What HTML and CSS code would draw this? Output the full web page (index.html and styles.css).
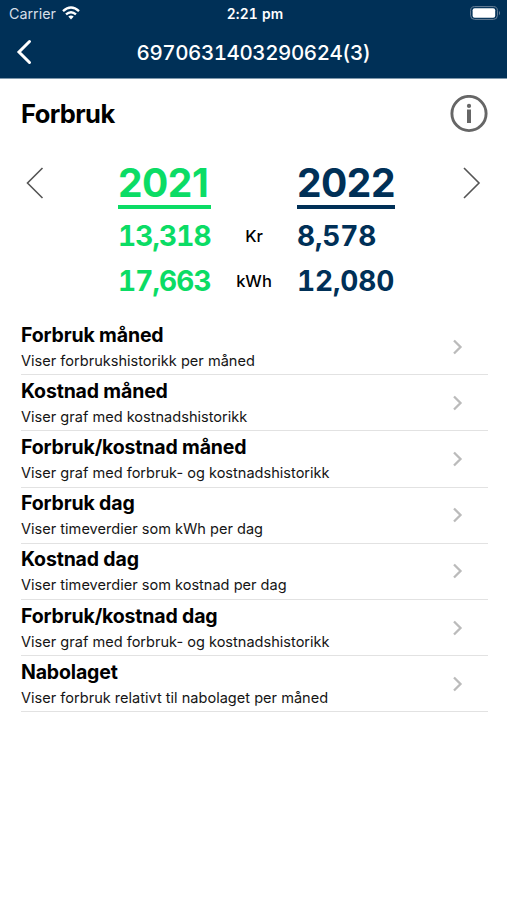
FILE: index.html
```html
<!DOCTYPE html>
<html lang="no">
<head>
<meta charset="utf-8">
<title>Forbruk</title>
<link rel="stylesheet" href="styles.css">
</head>
<body>
<header class="top">
  <div class="status">
    <div class="carrier"><span class="t carrier-name">Carrier</span>
      <svg class="wifi" width="18" height="14" viewBox="0 0 18 14"><g fill="none" stroke="#fff" stroke-width="2.4"><path d="M1 5.2Q9-2 17 5.2"/><path d="M4 8.4q5-4.4 10 0"/></g><path d="M6.3 10.6q2.700-2.200 5.400 0L9 13.500z" fill="#fff"/></svg>
    </div>
    <span class="t clock">2:21 pm</span>
    <svg class="battery" width="31" height="14" viewBox="0 0 31 14"><rect x=".6" y=".6" width="26.800" height="12.800" rx="4" fill="none" stroke="#6b8299"/><rect x="2.600" y="2.200" width="22.600" height="9.600" rx="2" fill="#fff"/><path d="M29 4.700q2 2.300 0 4.600z" fill="#6b8299"/></svg>
  </div>
  <nav class="nav">
    <svg width="16" height="26" viewBox="0 0 16 26"><path d="M13.500 2.500L3 13l10.500 10.500" fill="none" stroke="#fff" stroke-width="3" stroke-linecap="round"/></svg>
    <h1 class="t meter">6970631403290624(3)</h1>
    <span class="spacer"></span>
  </nav>
</header>
<main>
  <section class="heading">
    <h2 class="t title">Forbruk</h2>
    <svg width="38" height="38" viewBox="0 0 38 38"><circle cx="19" cy="18.500" r="17.100" fill="none" stroke="#666" stroke-width="2.900"/><circle cx="19" cy="10.900" r="2.100" fill="#666"/><path d="M17 14.500h4v13.500h-4z" fill="#666"/></svg>
  </section>
  <section class="compare">
    <svg class="prev" width="20" height="32" viewBox="0 0 20 32"><path d="M18.500 1L3.500 16l15 15" fill="none" stroke="#555" stroke-width="1.600"/></svg>
    <div class="figures">
      <div class="year green"><span class="t">2021</span></div><span></span><div class="year navy"><span class="t">2022</span></div>
      <span class="num green"><span class="t">13,318</span></span><span class="unit"><span class="t">Kr</span></span><span class="num navy"><span class="t">8,578</span></span>
      <span class="num green"><span class="t">17,663</span></span><span class="unit"><span class="t">kWh</span></span><span class="num navy"><span class="t">12,080</span></span>
    </div>
    <svg class="next" width="20" height="32" viewBox="0 0 20 32"><path d="M2 1l15 15-15 15" fill="none" stroke="#555" stroke-width="1.600"/></svg>
  </section>
  <ul class="menu">
    <li><div><h3 class="t">Forbruk måned</h3><p class="t">Viser forbrukshistorikk per måned</p></div><svg class="chev" viewBox="0 0 12 16"><path d="M2 1.500L8.500 8 2 14.500"/></svg></li>
    <li><div><h3 class="t">Kostnad måned</h3><p class="t">Viser graf med kostnadshistorikk</p></div><svg class="chev" viewBox="0 0 12 16"><path d="M2 1.500L8.500 8 2 14.500"/></svg></li>
    <li><div><h3 class="t">Forbruk/kostnad måned</h3><p class="t">Viser graf med forbruk- og kostnadshistorikk</p></div><svg class="chev" viewBox="0 0 12 16"><path d="M2 1.500L8.500 8 2 14.500"/></svg></li>
    <li><div><h3 class="t">Forbruk dag</h3><p class="t">Viser timeverdier som kWh per dag</p></div><svg class="chev" viewBox="0 0 12 16"><path d="M2 1.500L8.500 8 2 14.500"/></svg></li>
    <li><div><h3 class="t">Kostnad dag</h3><p class="t">Viser timeverdier som kostnad per dag</p></div><svg class="chev" viewBox="0 0 12 16"><path d="M2 1.500L8.500 8 2 14.500"/></svg></li>
    <li><div><h3 class="t">Forbruk/kostnad dag</h3><p class="t">Viser graf med forbruk- og kostnadshistorikk</p></div><svg class="chev" viewBox="0 0 12 16"><path d="M2 1.500L8.500 8 2 14.500"/></svg></li>
    <li><div><h3 class="t">Nabolaget</h3><p class="t">Viser forbruk relativt til nabolaget per måned</p></div><svg class="chev" viewBox="0 0 12 16"><path d="M2 1.500L8.500 8 2 14.500"/></svg></li>
  </ul>
</main>
</body>
</html>
```
FILE: styles.css
```css
* { box-sizing: border-box; margin: 0; padding: 0; }
body { width: 507px; height: 900px; overflow: hidden; background: #fff; color: #000; font-family: Inter, sans-serif; }
svg { display: block; flex: none; }
.t { white-space: nowrap; }
.top { height: 79px; background: #003057; color: #fff; border-bottom: 1px solid #7f98ac; }
.status { height: 27px; display: grid; grid-template-columns: 1fr auto 1fr; align-items: center; padding: 0 6px 0 9px; font-size: 14.300px; }
.carrier { display: flex; align-items: center; gap: 6px; }
.carrier-name { color: #d5dfe8; }
.wifi { margin-top: -2px; }
.clock { font-weight: 600; font-size: 13.800px; letter-spacing: .2px; font-feature-settings: "tnum"; }
.battery { justify-self: end; margin-top: -1px; }
.nav { height: 50px; display: flex; align-items: center; justify-content: space-between; padding: 0 16px; }
.spacer { width: 16px; }
.meter { font-size: 20.500px; font-weight: 500; letter-spacing: -.42px; font-feature-settings: "tnum"; }
.heading { height: 69px; display: flex; align-items: center; justify-content: space-between; padding: 0 19px 0 21px; }
.title { font-size: 25.500px; font-weight: 700; letter-spacing: -.6px; }
.compare { height: 171px; display: flex; justify-content: space-between; padding: 0 25px 0 24px; }
.prev, .next { margin-top: 19px; }
.figures { margin-left: 7px; display: grid; grid-template-columns: 93px 86px 98px; grid-template-rows: 66px 45px 45px; align-content: start; }
.year { align-self: start; margin-top: 9px; height: 52px; line-height: 51px; font-size: 39px; font-weight: 700; letter-spacing: -.5px; border-bottom: 4px solid; }
.num { font-size: 28px; font-weight: 700; line-height: 45px; font-feature-settings: "tnum"; }
.num.green { letter-spacing: -.9px; }
.num.navy { letter-spacing: -.15px; }
.unit { text-align: center; font-size: 16.500px; font-weight: 500; line-height: 45px; }
.green { color: #0bdc65; }
.navy { color: #003057; }
.menu { list-style: none; padding: 0 19px 0 21px; }
.menu li { height: 56.200px; display: flex; align-items: center; justify-content: space-between; border-bottom: 1px solid #e2e2e2; padding-right: 24px; }
.menu h3 { font-size: 19.500px; line-height: 26px; font-weight: 700; letter-spacing: -.16px; padding-top: 2px; }
.menu p { font-size: 14.570px; line-height: 25px; padding-top: 1px; color: #151515; }
.chev { width: 12px; height: 16px; fill: none; stroke: #bbb; stroke-width: 2.300; }
```
